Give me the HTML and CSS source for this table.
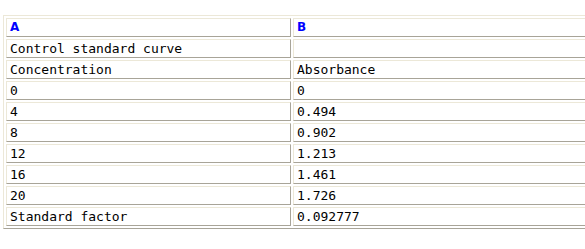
FILE: index.html
```html
<!DOCTYPE html>
<html>
<head>
<meta charset="utf-8">
<link rel="stylesheet" href="styles.css">
</head>
<body>
<div class="viewport">
<table class="sheet">
  <colgroup><col class="col-a"><col class="col-b"></colgroup>
  <tr class="head"><td>A</td><td>B</td></tr>
  <tr><td>Control standard curve</td><td></td></tr>
  <tr><td>Concentration</td><td>Absorbance</td></tr>
  <tr><td>0</td><td>0</td></tr>
  <tr><td>4</td><td>0.494</td></tr>
  <tr><td>8</td><td>0.902</td></tr>
  <tr><td>12</td><td>1.213</td></tr>
  <tr><td>16</td><td>1.461</td></tr>
  <tr><td>20</td><td>1.726</td></tr>
  <tr><td>Standard factor</td><td>0.092777</td></tr>
</table>
</div>
</body>
</html>
```
FILE: styles.css
```css
html, body {
  margin: 0;
  background: #ffffff;
  overflow: hidden;
}
.viewport {
  width: 585px;
  overflow: hidden;
  padding: 15px 0 0 3px;
  box-sizing: border-box;
}
.sheet {
  border-collapse: separate;
  border-spacing: 2px;
  border: 1px solid;
  border-color: #ece8d8 #a8a498 #a8a498 #ece8d8;
  table-layout: fixed;
  width: 620px;
}
.col-a { width: 285px; }
.col-b { width: 335px; }
.sheet td {
  border: 1px solid;
  border-color: #ece8d8 #a8a498 #a8a498 #ece8d8;
  padding: 0 3px;
  height: 17px;
  font-family: "DejaVu Sans Mono", monospace;
  font-size: 13px;
  line-height: 17px;
  color: #000;
  white-space: nowrap;
}
.sheet .head td {
  font-family: "DejaVu Sans", Verdana, sans-serif;
  font-weight: bold;
  font-size: 12px;
  color: #0000ff;
}
```
